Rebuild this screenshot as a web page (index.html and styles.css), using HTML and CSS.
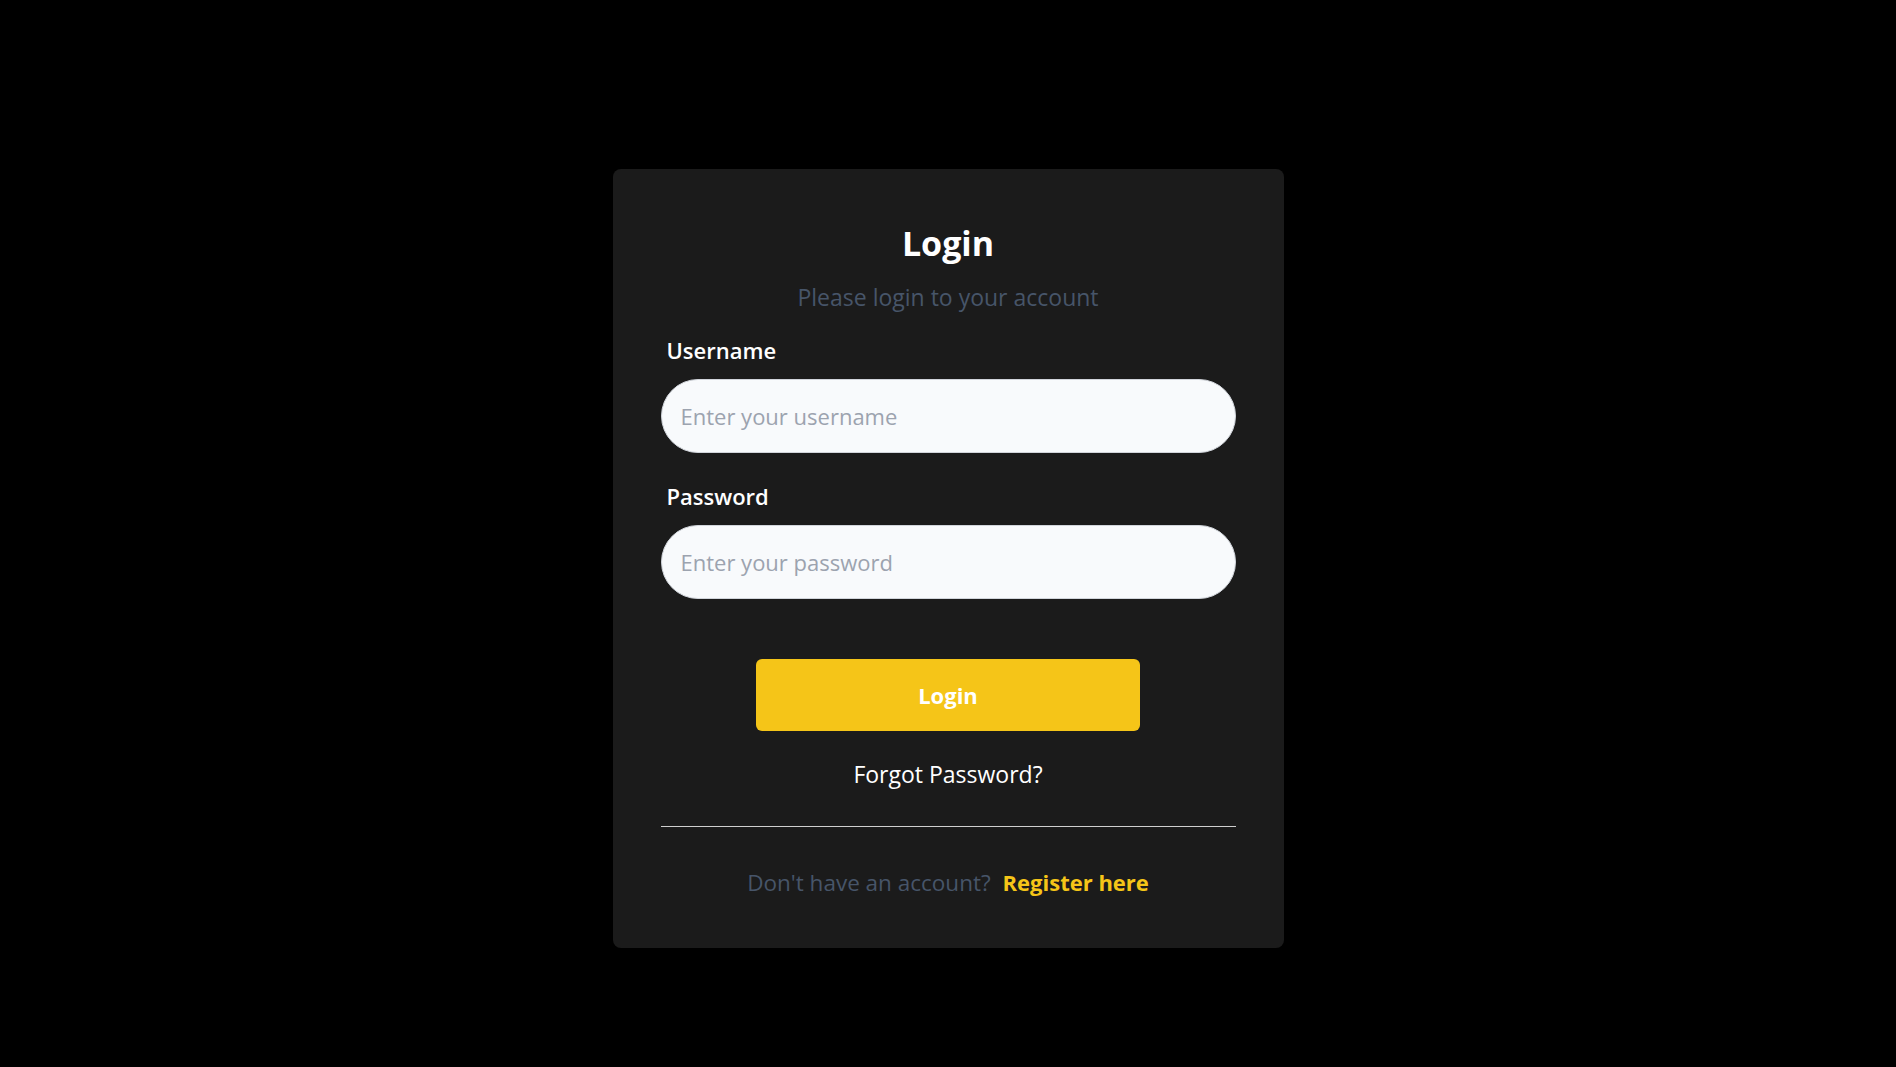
FILE: index.html
```html
<!DOCTYPE html>
<html lang="en">
<head>
    <meta charset="UTF-8">
    <meta name="viewport" content="width=device-width, initial-scale=1.0">
    <title>Login</title>
    <link rel="stylesheet" href="styles.css">
</head>
<body>

<div class="login-box">
    <h2>Login</h2>
    <p class="subtitle">Please login to your account</p>

    <form onsubmit="return false;">
        <label for="username">Username</label>
        <input type="text" id="username" placeholder="Enter your username">

        <label for="password" class="second">Password</label>
        <input type="password" id="password" placeholder="Enter your password">

        <button type="submit">Login</button>
    </form>

    <a href="#" class="forgot">Forgot Password?</a>

    <hr>

    <p class="register">Don't have an account? <a href="#">Register here</a></p>
</div>

</body>
</html>
```

FILE: styles.css
```css
body {
    font-family: "Open Sans", "Noto Sans", sans-serif;
    margin: 0;
    padding: 0;
    background-color: #000;
}

.login-box {
    width: 671px;
    box-sizing: border-box;
    margin: 169px auto 0;
    padding: 52px 48px 50px;
    background-color: #1b1b1b;
    border-radius: 8px;
    text-align: center;
}

h2 {
    margin: 0;
    font-size: 34px;
    line-height: 44px;
    font-weight: 700;
    color: #fff;
}

.subtitle {
    margin: 17px 0 0;
    font-size: 23px;
    line-height: 30px;
    color: #475569;
}

form {
    display: flex;
    flex-direction: column;
    text-align: left;
}

label {
    margin: 24px 0 0 6px;
    font-size: 22px;
    line-height: 28px;
    font-weight: 600;
    color: #fff;
}

label.second {
    margin-top: 29px;
}

input[type="text"],
input[type="password"] {
    margin-top: 15px;
    height: 74px;
    padding: 0 19px;
    font-family: inherit;
    font-size: 22px;
    color: #1f2937;
    background-color: #f8fafc;
    border: 1px solid #d1d5db;
    border-radius: 37px;
    box-sizing: border-box;
    outline: none;
}

input::placeholder {
    color: #9ca3af;
}

button {
    align-self: center;
    width: 384px;
    height: 72px;
    margin-top: 60px;
    font-family: inherit;
    font-size: 22px;
    font-weight: 700;
    color: #fff;
    background-color: #f5c518;
    border: none;
    border-radius: 6px;
    cursor: pointer;
}

.forgot {
    display: block;
    margin-top: 28px;
    font-size: 23px;
    line-height: 30px;
    color: #fff;
    text-decoration: none;
}

hr {
    margin: 37px 0 0;
    border: none;
    border-top: 1px solid #cfcfcf;
}

.register {
    margin: 40px 0 0;
    font-size: 22.5px;
    line-height: 30px;
    color: #475569;
}

.register a {
    margin-left: 6px;
    font-size: 22px;
    font-weight: 700;
    color: #f5c518;
    text-decoration: none;
}
```
